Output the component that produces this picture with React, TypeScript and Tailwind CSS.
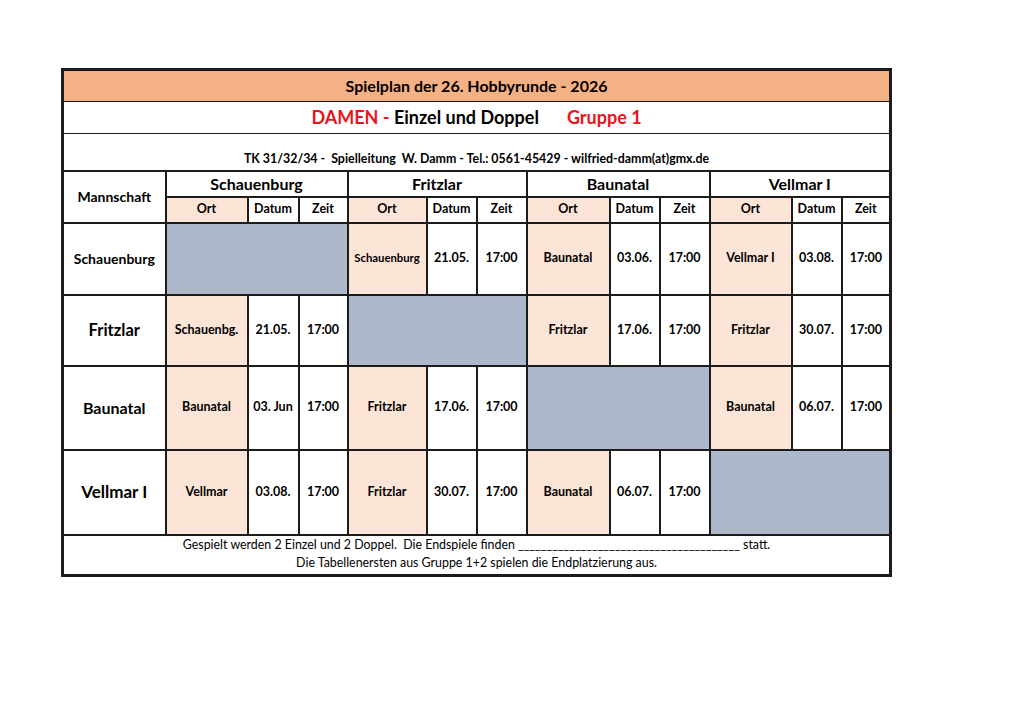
import React from 'react';

type Game = { ort: string; datum: string; zeit: string; small?: boolean } | null;

interface Row {
  team: string;
  labelSize: string;
  height: string;
  games: Game[];
}

const teams = ['Schauenburg', 'Fritzlar', 'Baunatal', 'Vellmar I'];

const rows: Row[] = [
  {
    team: 'Schauenburg',
    labelSize: 'text-[14px]',
    height: 'h-[72px]',
    games: [
      null,
      { ort: 'Schauenburg', datum: '21.05.', zeit: '17:00', small: true },
      { ort: 'Baunatal', datum: '03.06.', zeit: '17:00' },
      { ort: 'Vellmar I', datum: '03.08.', zeit: '17:00' },
    ],
  },
  {
    team: 'Fritzlar',
    labelSize: 'text-[16.5px]',
    height: 'h-[71px]',
    games: [
      { ort: 'Schauenbg.', datum: '21.05.', zeit: '17:00' },
      null,
      { ort: 'Fritzlar', datum: '17.06.', zeit: '17:00' },
      { ort: 'Fritzlar', datum: '30.07.', zeit: '17:00' },
    ],
  },
  {
    team: 'Baunatal',
    labelSize: 'text-[16px]',
    height: 'h-[84px]',
    games: [
      { ort: 'Baunatal', datum: '03. Jun', zeit: '17:00' },
      { ort: 'Fritzlar', datum: '17.06.', zeit: '17:00' },
      null,
      { ort: 'Baunatal', datum: '06.07.', zeit: '17:00' },
    ],
  },
  {
    team: 'Vellmar I',
    labelSize: 'text-[17px]',
    height: 'h-[85px]',
    games: [
      { ort: 'Vellmar', datum: '03.08.', zeit: '17:00' },
      { ort: 'Fritzlar', datum: '30.07.', zeit: '17:00' },
      { ort: 'Baunatal', datum: '06.07.', zeit: '17:00' },
      null,
    ],
  },
];

// column widths taken from the sheet (Mannschaft + 4 x Ort/Datum/Zeit)
const colWidths = [103, 82, 51, 49, 79, 50, 50, 83, 50, 50, 82, 50, 49];

const cell = 'border-2 border-[#1c1c1c] text-center align-middle';

const App: React.FC = () => {
  return (
    <div
      className="min-h-[724px] w-[1024px] bg-white pl-[61px] pt-[68px] text-black"
      style={{ fontFamily: 'Lato, "Open Sans", sans-serif' }}
    >
      <table className="w-[827px] table-fixed border-collapse border-[3px] border-[#1c1c1c]">
        <colgroup>
          {colWidths.map((w, i) => (
            <col key={i} style={{ width: w }} />
          ))}
        </colgroup>
        <tbody>
          <tr className="h-[32px]">
            <td colSpan={13} className="border border-[#1c1c1c] bg-[#f4b183] text-center text-[16px] font-bold">
              Spielplan der 26. Hobbyrunde - 2026
            </td>
          </tr>
          <tr className="h-[32px]">
            <td colSpan={13} className="border border-[#1c1c1c] text-center text-[18px] font-bold">
              <span className="text-[#e8141c]">DAMEN - </span>
              <span>Einzel und Doppel</span>
              <span className="ml-[28px] text-[#e8141c]">Gruppe 1</span>
            </td>
          </tr>
          <tr className="h-[37px]">
            <td colSpan={13} className="border border-[#1c1c1c] pb-[1px] text-center align-bottom text-[12.4px] font-bold">
              TK 31/32/34 -&nbsp; Spielleitung&nbsp; W. Damm - Tel.: 0561-45429 - wilfried-damm(at)gmx.de
            </td>
          </tr>
          <tr className="h-[26px]">
            <td rowSpan={2} className={`${cell} text-[14px] font-bold`}>
              Mannschaft
            </td>
            {teams.map((t) => (
              <td key={t} colSpan={3} className={`${cell} text-[16px] font-bold`}>
                {t}
              </td>
            ))}
          </tr>
          <tr className="h-[26px]">
            {teams.map((t) => (
              <React.Fragment key={t}>
                <td className={`${cell} bg-[#fce4d6] text-[12.5px] font-bold`}>Ort</td>
                <td className={`${cell} text-[12.5px] font-bold`}>Datum</td>
                <td className={`${cell} text-[12.5px] font-bold`}>Zeit</td>
              </React.Fragment>
            ))}
          </tr>
          {rows.map((r) => (
            <tr key={r.team} className={r.height}>
              <td className={`${cell} ${r.labelSize} font-bold`}>{r.team}</td>
              {r.games.map((g, i) =>
                g ? (
                  <React.Fragment key={i}>
                    <td className={`${cell} bg-[#fce4d6] font-bold ${g.small ? 'text-[11.3px]' : 'text-[12.5px]'}`}>
                      {g.ort}
                    </td>
                    <td className={`${cell} text-[12.5px] font-bold`}>{g.datum}</td>
                    <td className={`${cell} text-[12.5px] font-bold`}>{g.zeit}</td>
                  </React.Fragment>
                ) : (
                  <td key={i} colSpan={3} className={`${cell} bg-[#adb9ca]`} />
                )
              )}
            </tr>
          ))}
          <tr>
            <td colSpan={13} className="border-2 border-[#1c1c1c] pb-[2px] text-center text-[12.4px] leading-[18px]">
              <div className="whitespace-pre">
                Gespielt werden 2 Einzel und 2 Doppel.  Die Endspiele finden _______________________________________ statt.
              </div>
              <div>Die Tabellenersten aus Gruppe 1+2 spielen die Endplatzierung aus.</div>
            </td>
          </tr>
        </tbody>
      </table>
    </div>
  );
};

export default App;
